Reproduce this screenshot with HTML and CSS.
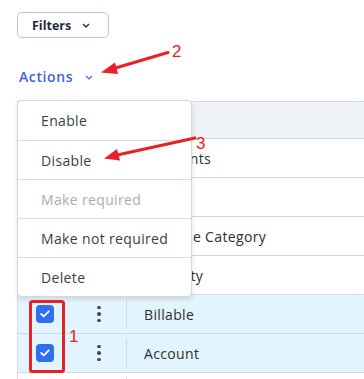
FILE: index.html
```html
<!DOCTYPE html>
<html>
<head>
<meta charset="utf-8">
<link rel="stylesheet" href="styles.css">
</head>
<body>
<div class="page">
  <button class="filters">Filters
    <svg class="chev" width="8" height="5" viewBox="0 0 8 5"><path d="M1 1 L4 4 L7 1" fill="none" stroke="#1f2a44" stroke-width="1.3"/></svg>
  </button>
  <div class="actions">Actions
    <svg class="chev" width="8" height="5" viewBox="0 0 8 5"><path d="M1 1 L4 4 L7 1" fill="none" stroke="#3d63dd" stroke-width="1.2"/></svg>
  </div>
  <div class="table">
    <div class="head"></div>
    <div class="row"><div class="c1"></div><div class="c2"><span class="kebab"><i></i><i></i><i></i></span></div><div class="sep"></div><div class="txt">Payments</div></div>
    <div class="row"><div class="c1"></div><div class="c2"><span class="kebab"><i></i><i></i><i></i></span></div><div class="sep"></div><div class="txt">Memo</div></div>
    <div class="row"><div class="c1"></div><div class="c2"><span class="kebab"><i></i><i></i><i></i></span></div><div class="sep"></div><div class="txt">Expense Category</div></div>
    <div class="row"><div class="c1"></div><div class="c2"><span class="kebab"><i></i><i></i><i></i></span></div><div class="sep"></div><div class="txt">Quantity</div></div>
    <div class="row sel"><div class="c1"><span class="cb"><svg width="10" height="8" viewBox="0 0 10 8"><path d="M1.2 4 L3.8 6.4 L8.8 1.4" fill="none" stroke="#fff" stroke-width="1.8" stroke-linecap="round" stroke-linejoin="round"/></svg></span></div><div class="c2"><span class="kebab"><i></i><i></i><i></i></span></div><div class="sep"></div><div class="txt">Billable</div></div>
    <div class="row sel"><div class="c1"><span class="cb"><svg width="10" height="8" viewBox="0 0 10 8"><path d="M1.2 4 L3.8 6.4 L8.8 1.4" fill="none" stroke="#fff" stroke-width="1.8" stroke-linecap="round" stroke-linejoin="round"/></svg></span></div><div class="c2"><span class="kebab"><i></i><i></i><i></i></span></div><div class="sep"></div><div class="txt">Account</div></div>
    <div class="row"><div class="c1"></div><div class="c2"></div><div class="sep"></div><div class="txt"></div></div>
    <div class="menu">
      <div class="item">Enable</div>
      <div class="item">Disable</div>
      <div class="item disabled">Make required</div>
      <div class="item">Make not required</div>
      <div class="item">Delete</div>
    </div>
  </div>
  <svg class="notes" width="364" height="379" viewBox="0 0 364 379">
    <g stroke="#e8202a" fill="#e8202a">
      <line x1="168" y1="52.5" x2="112" y2="69" stroke-width="3" stroke-linecap="round"/>
      <polygon points="101,72.5 115,62.5 118,74" stroke="none"/>
      <line x1="195" y1="138" x2="115" y2="155.5" stroke-width="3" stroke-linecap="round"/>
      <polygon points="104,158.5 117,149 120,160.5" stroke="none"/>
      <rect x="30.5" y="301.5" width="33" height="70" rx="2" fill="none" stroke-width="3"/>
    </g>
    <g fill="#e8202a" font-family="Liberation Sans, Arial, sans-serif" font-size="17">
      <text x="172" y="57">2</text>
      <text x="196" y="149">3</text>
      <text x="69" y="342">1</text>
    </g>
  </svg>
</div>
</body>
</html>
```
FILE: styles.css
```css
html, body { margin: 0; padding: 0; background: #fff; }
body { font-family: "Open Sans", "Liberation Sans", Arial, sans-serif; width: 364px; height: 379px; overflow: hidden; }
.page { position: relative; padding: 12px 0 0 17px; height: 379px; box-sizing: border-box; overflow: hidden; }
.filters {
  display: flex; align-items: center; gap: 11px;
  width: 92px; height: 26px; box-sizing: border-box;
  border: 1px solid #b9c6de; border-radius: 5px; background: #fff;
  padding: 0 0 0 14px; margin: 0;
  font-family: "Open Sans", sans-serif; font-weight: 700; font-size: 12.5px; color: #1f2a44;
}
.chev { display: block; }
.actions {
  display: flex; align-items: center; gap: 12px;
  margin-top: 27px; height: 22px; padding-left: 2px;
  font-weight: 600; font-size: 14px; letter-spacing: 0.6px; color: #3d63dd;
}
.actions .chev { margin-top: 2px; }
.table { position: relative; margin-top: 14px; border-left: 1px solid #d6dbe1; }
.head { height: 36px; background: #eef2f7; border-top: 1px solid #d6dbe1; border-bottom: 1px solid #d3d8de; }
.row { display: flex; align-items: center; height: 38px; border-bottom: 1px solid #d3d8de; background: #fff; }
.row.sel { background: #e2f4fd; }
.c1 { width: 62px; padding-left: 18px; box-sizing: border-box; display: flex; align-items: center; }
.c2 { width: 38px; display: flex; justify-content: center; }
.sep { width: 1px; height: 30px; background: #d3d8de; margin-left: 8px; }
.txt { padding-left: 17px; font-size: 14px; letter-spacing: 0.35px; color: #2b2e33; }
.cb { width: 18px; height: 18px; border-radius: 4px; background: #2f6fee; display: flex; align-items: center; justify-content: center; }
.kebab { display: flex; flex-direction: column; gap: 3px; }
.kebab i { display: block; width: 3.5px; height: 3.5px; border-radius: 50%; background: #4a4d52; }
.menu {
  position: absolute; left: -1px; top: -1px; width: 173px;
  background: #fff; border: 1px solid #d3d8de; border-radius: 4px;
  box-shadow: 0 2px 5px rgba(0,0,0,0.12);
}
.item { height: 38px; display: flex; align-items: center; padding-left: 23px; font-size: 14px; letter-spacing: 0.35px; color: #3b3e43; border-top: 1px solid #d6dbe1; }
.item:first-child { border-top: none; height: 39px; }
.item.disabled { color: #a9adb3; }
.notes { position: absolute; left: 0; top: 0; pointer-events: none; }
```
